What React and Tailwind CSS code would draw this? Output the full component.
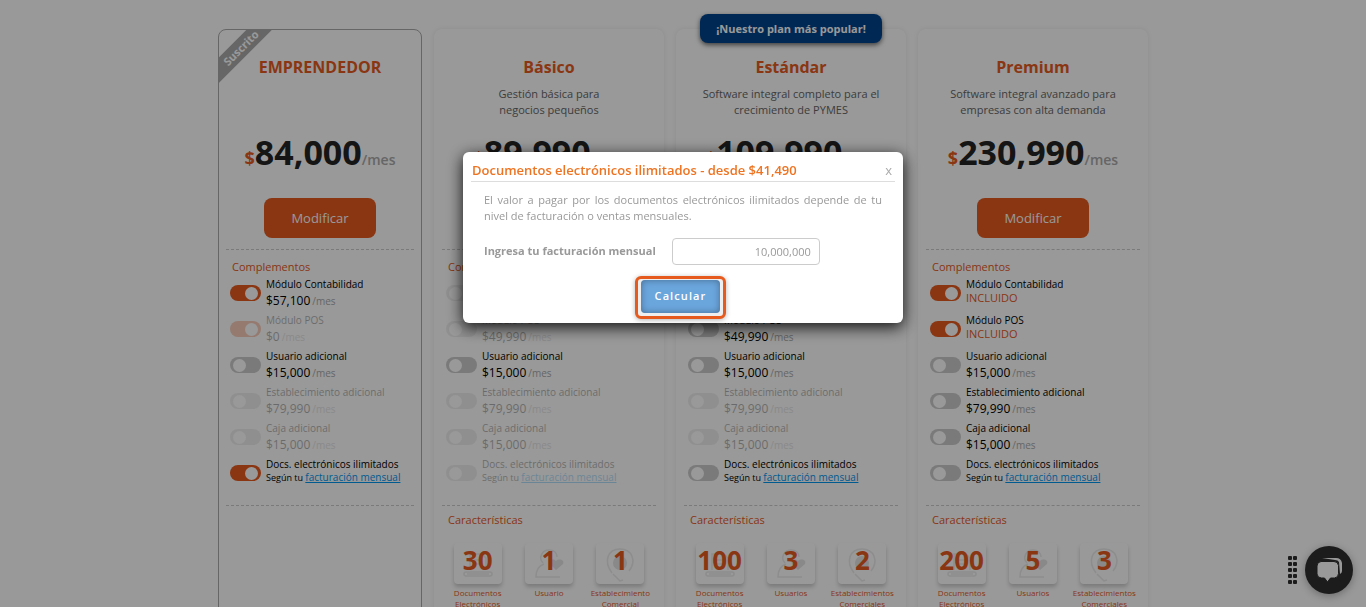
import React, { useState } from 'react';
import clsx from 'clsx';

const ADDONS = [
  'Módulo Contabilidad',
  'Módulo POS',
  'Usuario adicional',
  'Establecimiento adicional',
  'Caja adicional',
  'Docs. electrónicos ilimitados',
];

// one entry per add-on, in the same order as ADDONS
const PLANS = [
  {
    id: 'emprendedor',
    name: 'EMPRENDEDOR',
    price: '84,000',
    subscribed: true,
    addons: [
      { price: '$57,100', on: true },
      { price: '$0', on: true, disabled: true },
      { price: '$15,000' },
      { price: '$79,990', disabled: true },
      { price: '$15,000', disabled: true },
      { billing: true, on: true },
    ],
  },
  {
    id: 'basico',
    name: 'Básico',
    description: ['Gestión básica para', 'negocios pequeños'],
    price: '89,990',
    addons: [
      { price: '$57,100', disabled: true },
      { price: '$49,990', disabled: true },
      { price: '$15,000' },
      { price: '$79,990', disabled: true },
      { price: '$15,000', disabled: true },
      { billing: true, disabled: true },
    ],
    features: [
      { icon: 'docs', value: 30, label: 'Documentos Electrónicos' },
      { icon: 'user', value: 1, label: 'Usuario' },
      { icon: 'pin', value: 1, label: 'Establecimiento Comercial' },
    ],
  },
  {
    id: 'estandar',
    name: 'Estándar',
    description: ['Software integral completo para el', 'crecimiento de PYMES'],
    price: '109,990',
    popular: true,
    addons: [
      { price: '$57,100' },
      { price: '$49,990' },
      { price: '$15,000' },
      { price: '$79,990', disabled: true },
      { price: '$15,000', disabled: true },
      { billing: true },
    ],
    features: [
      { icon: 'docs', value: 100, label: 'Documentos Electrónicos' },
      { icon: 'user', value: 3, label: 'Usuarios' },
      { icon: 'pin', value: 2, label: 'Establecimientos Comerciales' },
    ],
  },
  {
    id: 'premium',
    name: 'Premium',
    description: ['Software integral avanzado para', 'empresas con alta demanda'],
    price: '230,990',
    addons: [
      { included: true, on: true },
      { included: true, on: true },
      { price: '$15,000' },
      { price: '$79,990' },
      { price: '$15,000' },
      { billing: true },
    ],
    features: [
      { icon: 'docs', value: 200, label: 'Documentos Electrónicos' },
      { icon: 'user', value: 5, label: 'Usuarios' },
      { icon: 'pin', value: 3, label: 'Establecimientos Comerciales' },
    ],
  },
];

const FeatureIcon = ({ type }) => (
  <svg viewBox="0 0 36 36" className="absolute inset-x-0 top-[3px] mx-auto w-9 h-9" fill="none" stroke="#ebebeb" strokeWidth="1.5" aria-hidden="true">
    {type === 'docs' && (
      <>
        <path d="M10 24V8h12l4 4v12M14 14h8M14 18h8" />
        <rect x="4" y="26" width="28" height="4" rx="2" />
        <path d="M7 28h22" />
      </>
    )}
    {type === 'user' && (
      <>
        <path d="M12 17c-5-5-1-13 6-13 5 0 8 3 8 7M13 18c-6 2-8 6-8 13h24" />
        <path d="M25 24l-6-6c-2-4 3-6 6-3 3-3 9-1 7 3z" fill="#e4e4e4" stroke="none" />
      </>
    )}
    {type === 'pin' && (
      <>
        <path d="M10 27C1 15 6 3 18 3s17 12 9 22M11 28l7 7 3-1" />
        <circle cx="18" cy="17" r="7" fill="#e4e4e4" stroke="none" />
      </>
    )}
  </svg>
);

const Addon = ({ planId, name, index, addon }) => {
  const [checked, setChecked] = useState(Boolean(addon.on));
  const id = `${planId}-addon-${index}`;

  return (
    <li className={clsx('flex h-9 gap-[5px]', addon.disabled && 'opacity-30')}>
      <input
        id={id}
        type="checkbox"
        role="switch"
        checked={checked}
        disabled={addon.disabled}
        onChange={(e) => setChecked(e.target.checked)}
        className="appearance-none mt-[9px] flex h-4 w-[31px] shrink-0 items-center rounded-full bg-[#cccccc] px-[3px] before:size-[13px] before:rounded-full before:bg-white checked:justify-end checked:bg-[#e65a1e]"
      />
      <div className="min-w-0 whitespace-nowrap text-black">
        <label htmlFor={id} className="block text-[10px] leading-4">
          {name}
        </label>
        {addon.included && <div className="text-[11px] leading-[11px] text-[#e65a1e]">INCLUIDO</div>}
        {addon.price && (
          <div className="text-xs leading-[17px]">
            {addon.price}
            <span className="ml-[2px] text-[10px] text-[#aaaaaa]">/mes</span>
          </div>
        )}
        {addon.billing && (
          <div className="text-[9px] leading-[11px]">
            Según tu{' '}
            <a href="#facturacion" className="text-[10px] text-[#0098f0] underline">
              facturación mensual
            </a>
          </div>
        )}
      </div>
    </li>
  );
};

const PlanCard = ({ plan }) => (
  <article
    className={clsx(
      'relative rounded-lg border bg-white px-[7px] pb-10',
      plan.subscribed ? 'border-[#aaaaaa]' : 'border-transparent shadow-[0_0_5px_rgba(0,0,0,0.08)]'
    )}
  >
    {plan.subscribed && (
      <div className="absolute inset-0 overflow-hidden rounded-lg pointer-events-none">
        <span className="absolute -left-[38px] top-[9px] w-[120px] -rotate-45 bg-[#aaaaaa] text-center text-[11px] leading-[18px] font-bold text-white">
          Suscrito
        </span>
      </div>
    )}
    {plan.popular && (
      <div className="absolute inset-x-0 -top-4 flex justify-center">
        <span className="rounded-lg bg-[#00438e] px-4 text-[11px] leading-[29px] font-bold whitespace-nowrap text-white shadow-[0_2px_5px_rgba(0,0,0,0.6)]">
          ¡Nuestro plan más popular!
        </span>
      </div>
    )}

    <header className="flex flex-col items-center text-center">
      <h2 className="mt-[25px] text-base leading-6 font-bold text-[#e65a1e]">{plan.name}</h2>
      <div className="mt-[7px] h-8 text-[11px] leading-4 whitespace-nowrap text-[#666666]">
        {plan.description?.map((line) => (
          <p key={line}>{line}</p>
        ))}
      </div>
      <p className="mt-[14px] text-[34px] leading-10 font-bold whitespace-nowrap text-[#232323]">
        <span className="text-lg text-[#e65a1e]">$</span>
        {plan.price}
        <span className="text-sm font-semibold text-[#aaaaaa]">/mes</span>
      </p>
      <button type="button" className="mt-[26px] h-10 w-28 rounded-lg bg-[#e65a1e] pt-px text-[13px] text-white">
        Modificar
      </button>
    </header>

    {/* Complementos */}
    <section className="mt-[11px] h-64 border-t border-dashed border-[#cccccc] px-1 pt-2">
      <h3 className="px-[2px] text-[11px] leading-[18px] text-[#e65a1e]">Complementos</h3>
      <ul>
        {plan.addons.map((addon, i) => (
          <Addon key={ADDONS[i]} planId={plan.id} name={ADDONS[i]} index={i} addon={addon} />
        ))}
      </ul>
    </section>

    {/* Características */}
    <section className="border-t border-dashed border-[#cccccc] pt-[5px]">
      {plan.features && (
        <>
          <h3 className="px-[6px] text-[11px] leading-[18px] text-[#e65a1e]">Características</h3>
          <ul className="mt-[14px] grid grid-cols-3">
            {plan.features.map((f) => (
              <li key={f.icon} className="flex flex-col items-center">
                <div className="relative h-[41px] w-12 rounded bg-white text-center shadow-[0_3px_4px_rgba(0,0,0,0.2)]">
                  <FeatureIcon type={f.icon} />
                  <span className="relative block text-[26px] leading-[34px] font-bold text-[#e65a1e]">{f.value}</span>
                </div>
                <span className="mt-[3px] w-16 text-center text-[8px] leading-[11px] text-[#e65a1e]">{f.label}</span>
              </li>
            ))}
          </ul>
        </>
      )}
    </section>
  </article>
);

const ChatLauncher = () => (
  <div className="fixed right-[13px] bottom-[13px] flex items-center gap-2">
    <div className="grid grid-cols-2 gap-x-px gap-y-[2px]">
      {Array.from({ length: 10 }, (_, i) => (
        <span key={i} className="size-1 rounded-[1px] bg-[#2f2f2f]" />
      ))}
    </div>
    <button type="button" aria-label="Chat" className="flex size-12 items-center justify-center rounded-full bg-[#2f2f2f] shadow-[0_2px_8px_rgba(0,0,0,0.3)]">
      <svg viewBox="0 0 48 48" className="size-12" aria-hidden="true">
        <path d="M17 12h14q5 0 6 5v8q0 2-2 3l-1-12q-1-2-4-2z" fill="#fff" />
        <path d="M16 15.500h13q4 0 4.500 4v8q0 4-4 4.500h-4l-3 4-3-4h-3q-4 0-4.500-4v-8q0-4 4-4.500z" fill="#fff" stroke="#2f2f2f" strokeWidth="1" />
      </svg>
    </button>
  </div>
);

const BillingModal = ({ onClose }) => {
  const [amount, setAmount] = useState('10,000,000');

  return (
    <div className="fixed inset-0 flex items-start justify-center bg-black/40 pt-[152px]">
      <div role="dialog" aria-labelledby="modal-title" className="w-[440px] rounded-md bg-white px-2 pt-2 pb-1 shadow-[0_4px_16px_rgba(0,0,0,0.9)]">
        <div className="flex items-center justify-between border-b border-[#dddddd] pr-[3px] pl-px leading-[21px]">
          <h2 id="modal-title" className="text-[13px] font-semibold text-[#ee7422]">
            Documentos electrónicos ilimitados - desde $41,490
          </h2>
          <button type="button" aria-label="Cerrar" onClick={onClose} className="text-[13px] text-[#aaaaaa]">
            x
          </button>
        </div>
        <div className="px-[13px] pt-[10px] text-[11px] text-[#999999]">
          <p className="text-justify leading-4">
            El valor a pagar por los documentos electrónicos ilimitados depende de tu nivel de facturación o ventas mensuales.
          </p>
          <div className="mt-[14px] flex items-center gap-4">
            <label htmlFor="billing" className="font-bold">
              Ingresa tu facturación mensual
            </label>
            <input
              id="billing"
              type="text"
              value={amount}
              onChange={(e) => setAmount(e.target.value)}
              className="h-[27px] w-[148px] rounded border border-[#cccccc] px-2 text-right"
            />
          </div>
        </div>
        <div className="mt-[11px] flex justify-center pr-[5px]">
          <div className="rounded-md border-3 border-[#e65a1e] bg-[#eeeeee] px-[3px] pt-px pb-[3px] shadow-[0_1px_5px_rgba(0,0,0,0.3)]">
            <button
              type="button"
              className="block h-[33px] w-[79px] rounded bg-[#6aa5dc] text-[11px] font-semibold tracking-widest text-white shadow-[inset_0_0_7px_rgba(0,0,0,0.35)]"
            >
              Calcular
            </button>
          </div>
        </div>
      </div>
    </div>
  );
};

export default function App() {
  const [open, setOpen] = useState(true);

  return (
    <div className={clsx("min-h-screen bg-white font-['Open_Sans',sans-serif]", open && 'h-screen overflow-hidden')}>
      <main className="mx-auto grid max-w-[930px] grid-cols-[204fr_230fr_230fr_230fr] gap-3 pt-[29px]">
        {PLANS.map((plan) => (
          <PlanCard key={plan.id} plan={plan} />
        ))}
      </main>
      <ChatLauncher />
      {open && <BillingModal onClose={() => setOpen(false)} />}
    </div>
  );
}
